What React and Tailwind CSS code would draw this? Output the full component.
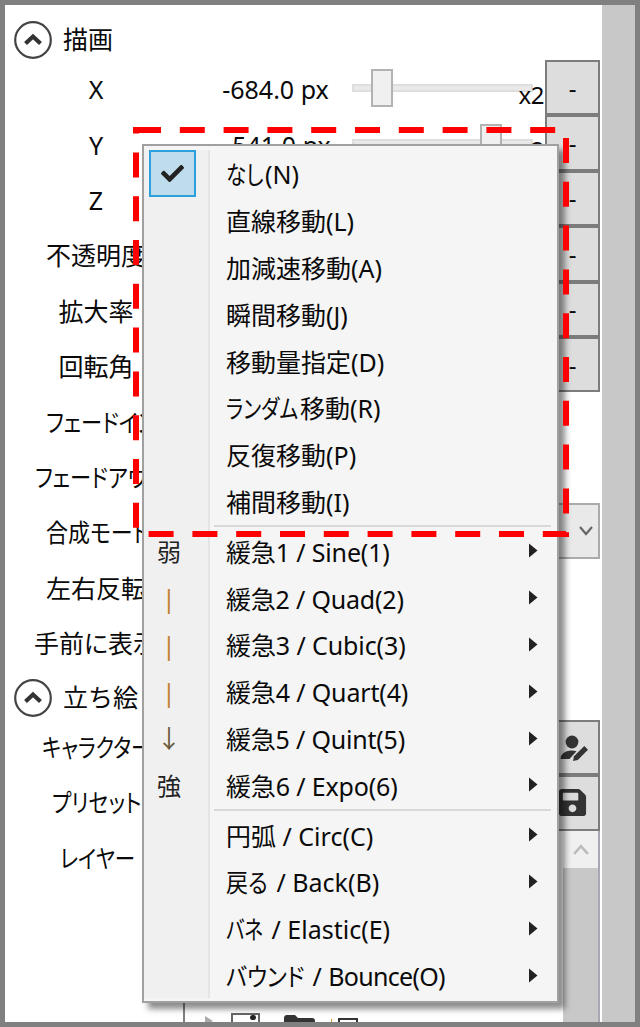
import React from "react";
import { FaCheck, FaSave } from "react-icons/fa";

function Circle() {
  return (
    <svg width="38" height="38" viewBox="0 0 38 38" className="shrink-0">
      <circle cx="19" cy="19" r="17.8" fill="none" stroke="#444" strokeWidth="2.2" />
      <polyline points="11.5,22.5 19,15.5 26.5,22.5" fill="none" stroke="#333" strokeWidth="4.2" />
    </svg>
  );
}

function Chevron({ up, color, w = 14, h = 10 }) {
  return (
    <svg width={w} height={h} viewBox="0 0 14 10" preserveAspectRatio="none">
      <polyline points={up ? "1,9 7,2 13,9" : "1,1 7,8 13,1"} fill="none" stroke={color} strokeWidth="2.2" />
    </svg>
  );
}

function UserPen() {
  return (
    <svg width="30" height="30" viewBox="0 0 30 30">
      <circle cx="13" cy="9" r="6.4" fill="#333" />
      <path d="M1.5 26 Q2 18.5 11 17.5 Q15 17.3 17.5 18.2 L10.5 26 Z" fill="#333" />
      <path d="M14 28 L15 23.2 L25.3 13 L29 16.7 L18.8 27 Z" fill="#333" />
    </svg>
  );
}

function Narrow({ className, children }) {
  return <span className={"inline-block origin-left whitespace-nowrap " + className}>{children}</span>;
}

function Header({ title, className }) {
  return (
    <div className={"flex items-center gap-[11px] pl-[9px] " + className}>
      <Circle />
      <span>{title}</span>
    </div>
  );
}

function Label({ children, className = "pt-[4px]" }) {
  return (
    <div className={"w-[182px] shrink-0 flex justify-center whitespace-nowrap [font-feature-settings:'palt'] " + className}>
      {children}
    </div>
  );
}

function Slider({ thumb, hasScale }) {
  return (
    <div className="relative w-[193px] h-full flex items-center">
      <div className="w-[181px] h-[8px] bg-[#e9e9e9] border-2 border-[#dedede]" />
      <div className={"absolute top-[9px] w-[22px] h-[38px] bg-[#f0f0f0] border-2 border-[#b2b2b2] " + thumb} />
      {hasScale && <span className="absolute right-[1px] top-[23px] text-[24px] leading-[24px] tracking-[-0.5px]">x2</span>}
    </div>
  );
}

function MinusButton() {
  return (
    <div className="w-[55px] h-full shrink-0 bg-[#dddddd] border-2 border-[#7c7c7c] flex items-center justify-center text-[24px]">
      -
    </div>
  );
}

function SliderRow({ label, value, thumb, valueClass = "pl-[12px]" }) {
  return (
    <div className="flex items-center h-[55.4px]">
      <Label>{label}</Label>
      <div className={"w-[165px] shrink-0 flex justify-center pt-[4px] whitespace-nowrap " + valueClass}>{value}</div>
      <Slider thumb={thumb} hasScale={Boolean(value)} />
      <MinusButton />
    </div>
  );
}

function PlainRow({ label, labelClass, children }) {
  return (
    <div className="flex items-center h-[55.4px]">
      <Label className={labelClass}>{label}</Label>
      <div className="flex-1" />
      {children}
      <div className="w-[2px]" />
    </div>
  );
}

function IconButton({ children }) {
  return (
    <div className="w-[55px] h-full shrink-0 bg-[#dddddd] border-2 border-[#7c7c7c] flex items-center justify-center text-[#333]">
      {children}
    </div>
  );
}

function Arrow() {
  return (
    <svg width="10" height="15" viewBox="0 0 10 15" className="absolute right-[19px] top-[16px]">
      <polygon points="1,0.5 9.5,7.5 1,14.5" fill="#222" />
    </svg>
  );
}

function Item({ text, sub, gutter, className = "" }) {
  return (
    <div className="relative flex h-[46.8px] items-center">
      <div className="w-[66px] h-full shrink-0 bg-[#f0f0f0] border-r-2 border-[#e4e4e4] flex items-center">
        {gutter}
      </div>
      <span className={"pl-[16px] pt-[3px] whitespace-nowrap [font-feature-settings:'palt'] " + className}>{text}</span>
      {sub && <Arrow />}
    </div>
  );
}

function Sep() {
  return (
    <div className="flex h-[3px]">
      <div className="w-[66px] h-full shrink-0 bg-[#f0f0f0] border-r-2 border-[#e4e4e4]" />
      <div className="flex-1 pl-[4px] pr-[6px] pt-[1px]">
        <div className="h-[2px] bg-[#d8d8d8]" />
      </div>
    </div>
  );
}

function Mark({ children, className = "" }) {
  return <div className={"w-[50px] text-center pt-[2px] " + className}>{children}</div>;
}

export default function App() {
  return (
    <div className="relative w-[640px] h-[1027px] box-border border-[5px] border-[#808080] bg-white flex overflow-hidden text-[25px] text-[#0a0a0a] font-['Noto_Sans','Noto_Sans_CJK_JP',sans-serif] leading-none">
      <div className="w-[597px] shrink-0 flex flex-col h-full">
        <Header title="描画" className="h-[55px] pt-[14px]" />
        <SliderRow label="X" value="-684.0 px" thumb="left-[19px]" />
        <SliderRow label="Y" value="541.0 px" thumb="left-[128px]" valueClass="pl-[24px]" />
        <SliderRow label="Z" thumb="left-[80px]" />
        <SliderRow label="不透明度" thumb="left-[150px]" />
        <SliderRow label="拡大率" thumb="left-[80px]" />
        <SliderRow label="回転角" thumb="left-[80px]" />
        <PlainRow label={<Narrow className="w-[110px] scale-x-[0.85]">フェードイン</Narrow>} labelClass="pt-[4px] pl-[10px]" />
        <PlainRow label={<Narrow className="w-[128px] scale-x-[0.85]">フェードアウト</Narrow>} labelClass="pt-[4px] pl-[6px]" />
        <PlainRow label={<Narrow className="w-[100px] scale-x-[0.88]">合成モード</Narrow>} labelClass="pt-[4px]">
          <div className="w-[55px] h-full bg-[#e9e9e9] border-2 border-[#ababab] flex items-center justify-end pr-[5px]">
            <Chevron color="#666" />
          </div>
        </PlainRow>
        <PlainRow label="左右反転" labelClass="pt-[4px]" />
        <PlainRow label="手前に表示" labelClass="pt-[4px]" />
        <Header title="立ち絵" className="h-[50.6px] pt-[6px]" />
        <PlainRow label={<Narrow className="w-[108px] scale-x-[0.82]">キャラクター</Narrow>} labelClass="">
          <IconButton><span className="ml-[2px] flex"><UserPen /></span></IconButton>
        </PlainRow>
        <PlainRow label={<Narrow className="w-[89px] scale-x-[0.84]">プリセット</Narrow>} labelClass="">
          <IconButton><FaSave size={31} /></IconButton>
        </PlainRow>
        <div className="flex flex-1 min-h-0">
          <div className="w-[178px] shrink-0 flex justify-center pt-[15px] pl-[4px] whitespace-nowrap [font-feature-settings:'palt']">
            <Narrow className="w-[72px] scale-x-[0.82]">レイヤー</Narrow>
          </div>
          <div className="w-[417px] border-l-2 border-[#808080] flex">
            <div className="flex-1 pt-[182px] pl-[20px] flex items-start">
              <svg width="8" height="10" viewBox="0 0 8 10" className="mt-[3px] mr-[18px]"><polygon points="0,0 8,5 0,10" fill="#aaa" /></svg>
              <div className="w-[29px] h-[20px] border-2 border-[#666] flex justify-end pr-[2px] mr-[23px]"><span className="w-[6px] h-[5px] rounded-full bg-[#222]" /></div>
              <svg width="33" height="16" viewBox="0 0 33 16" className="mt-[1px] mr-[15px]"><path d="M1 16V4a3 3 0 0 1 3-3h8l3 3h14a3 3 0 0 1 3 3v9z" fill="#333" /></svg>
              <span className="w-px h-[8px] mt-[6px] bg-[#d99a3c] mr-[6px]" />
              <span className="w-[20px] h-[8px] mt-[5px] border-t-2 border-x-2 border-[#333]" />
            </div>
            <div className="w-[37px] h-full shrink-0 bg-[#c8c8c8] border-r-2 border-[#a8a8b4] flex flex-col">
              <div className="h-[37px] bg-[#f0f0f0] flex items-center justify-center">
                <Chevron up color="#bbbbbb" w={16} h={11} />
              </div>
            </div>
          </div>
        </div>
      </div>
      <div className="w-[33px] shrink-0 ml-auto bg-[#c8c8c8]" />

      {/* context menu */}
      <div className="absolute left-[137px] top-[139px] w-[417px] h-[859px] box-border bg-[#f5f5f5] border-2 border-[#a0a0a0] pt-[4px] shadow-[6px_6px_6px_rgba(0,0,0,0.45)]">
        <Item
          text={<><Narrow className="w-[39px] scale-x-[0.82]">なし</Narrow>(N)</>}
          gutter={
            <div className="ml-[5px] w-[47px] h-[47px] bg-[#bfdcec] border-2 border-[#2ba0dc] flex items-center justify-center text-[#222]">
              <FaCheck size={23} />
            </div>
          }
        />
        <Item text="直線移動(L)" />
        <Item text="加減速移動(A)" />
        <Item text="瞬間移動(J)" />
        <Item text="移動量指定(D)" />
        <Item text={<><Narrow className="w-[74px] scale-x-[0.8]">ランダム</Narrow>移動(R)</>} />
        <Item text="反復移動(P)" />
        <Item text="補間移動(I)" />
        <Sep />
        <Item sub className="tracking-[-0.15px]" text="緩急1 / Sine(1)" gutter={<Mark className="text-[#222] text-[24px]">弱</Mark>} />
        <Item sub className="tracking-[-0.2px]" text="緩急2 / Quad(2)" gutter={<Mark className="text-[#c0822c]">|</Mark>} />
        <Item sub className="tracking-[-0.1px]" text="緩急3 / Cubic(3)" gutter={<Mark className="text-[#c0822c]">|</Mark>} />
        <Item sub className="tracking-[-0.15px]" text="緩急4 / Quart(4)" gutter={<Mark className="text-[#c0822c]">|</Mark>} />
        <Item sub className="tracking-[-0.2px]" text="緩急5 / Quint(5)" gutter={<Mark className="text-[#6b5a3c]">↓</Mark>} />
        <Item sub className="tracking-[-0.15px]" text="緩急6 / Expo(6)" gutter={<Mark className="text-[#222] text-[24px]">強</Mark>} />
        <Sep />
        <Item sub text="円弧 / Circ(C)" />
        <Item sub text={<><Narrow className="w-[44px] scale-x-[0.88]">戻る</Narrow> / Back(B)</>} />
        <Item sub text={<><Narrow className="w-[39px] scale-x-[0.78]">バネ</Narrow> / Elastic(E)</>} />
        <Item sub text={<><Narrow className="w-[80px] scale-x-[0.89]">バウンド</Narrow> / <span className="tracking-[-0.7px]">Bounce(O)</span></>} />
      </div>

      {/* red dashed annotation */}
      <svg className="absolute left-0 top-0 pointer-events-none" width="630" height="1017">
        <rect x="131" y="125" width="430" height="404" fill="none" stroke="#ff0000" strokeWidth="6" strokeDasharray="25 18.8" />
      </svg>
    </div>
  );
}
